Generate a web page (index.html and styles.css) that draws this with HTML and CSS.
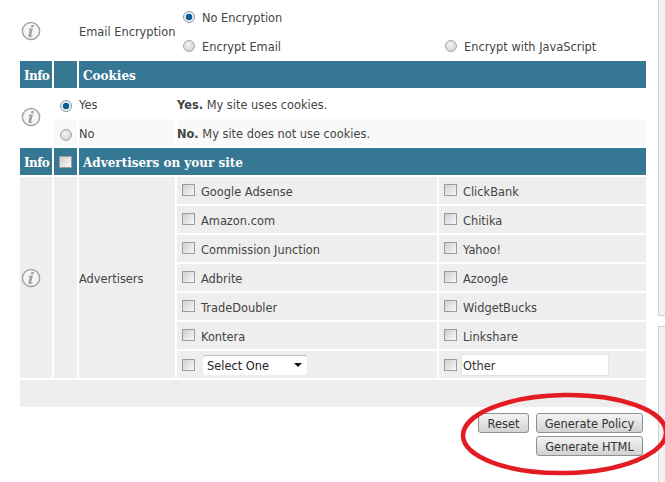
FILE: index.html
```html
<!DOCTYPE html>
<html lang="en">
<head>
<meta charset="utf-8">
<title>Privacy policy generator</title>
<link rel="stylesheet" href="styles.css">
</head>
<body>
<div class="side side-top"></div>
<div class="side side-bottom"></div>
<main class="page">
<table class="form">
<colgroup><col class="c-info"><col class="c-check"><col class="c-label"><col class="c-main"><col class="c-alt"></colgroup>
<tr class="sliver"><td colspan="5"></td></tr>
<tr class="enc">
<td class="info"><svg class="i-icon" viewBox="0 0 20 20"><use href="#info"/></svg></td>
<td></td>
<td class="label">Email Encryption</td>
<td colspan="2" class="enc-opts">
<div class="enc-line"><span class="enc-item"><span class="radio on"></span><span class="enc-text">No Encryption</span></span></div>
<div class="enc-line"><span class="enc-item"><span class="radio"></span><span class="enc-text">Encrypt Email</span></span><span class="enc-item"><span class="radio"></span><span class="enc-text">Encrypt with JavaScript</span></span></div>
</td>
</tr>
<tr class="head"><th class="head-info">Info</th><th></th><th colspan="3">Cookies</th></tr>
<tr class="plain">
<td class="info up" rowspan="2"><svg class="i-icon" viewBox="0 0 20 20"><use href="#info"/></svg></td>
<td class="mid"><span class="radio on"></span></td>
<td>Yes</td>
<td colspan="2"><b>Yes.</b> My site uses cookies.</td>
</tr>
<tr class="plain alt">
<td class="mid"><span class="radio"></span></td>
<td>No</td>
<td colspan="2"><b>No.</b> My site does not use cookies.</td>
</tr>
<tr class="head"><th class="head-info">Info</th><th class="mid"><span class="check"></span></th><th colspan="3">Advertisers on your site</th></tr>
<tr class="ad">
<td class="info" rowspan="7"><svg class="i-icon" viewBox="0 0 20 20"><use href="#info"/></svg></td>
<td rowspan="7"></td>
<td rowspan="7" class="label">Advertisers</td>
<td class="opt"><span class="check"></span>Google Adsense</td>
<td class="opt"><span class="check"></span>ClickBank</td>
</tr>
<tr class="ad"><td class="opt"><span class="check"></span>Amazon.com</td><td class="opt"><span class="check"></span>Chitika</td></tr>
<tr class="ad"><td class="opt"><span class="check"></span>Commission Junction</td><td class="opt"><span class="check"></span>Yahoo!</td></tr>
<tr class="ad"><td class="opt"><span class="check"></span>Adbrite</td><td class="opt"><span class="check"></span>Azoogle</td></tr>
<tr class="ad"><td class="opt"><span class="check"></span>TradeDoubler</td><td class="opt"><span class="check"></span>WidgetBucks</td></tr>
<tr class="ad"><td class="opt"><span class="check"></span>Kontera</td><td class="opt"><span class="check"></span>Linkshare</td></tr>
<tr class="ad">
<td class="field"><span class="check"></span><span class="select"><span class="select-text">Select One</span><span class="caret"></span></span></td>
<td class="field"><span class="check tight"></span><span class="textbox">Other</span></td>
</tr>
<tr class="foot"><td colspan="5"></td></tr>
</table>
<div class="actions">
<div class="action-row"><button class="btn btn-reset">Reset</button><button class="btn btn-wide">Generate Policy</button></div>
<div class="action-row"><button class="btn btn-wide">Generate HTML</button></div>
</div>
</main>
<svg class="ring" viewBox="0 0 665 482"><ellipse cx="564.5" cy="434" rx="101.5" ry="39" transform="rotate(-1 564.5 434)"/></svg>
<svg class="defs" width="0" height="0">
<symbol id="info" viewBox="0 0 20 20">
<circle cx="10" cy="10" r="8.6" fill="#f6f6f6" stroke="#a6a6a6" stroke-width="1.5"/>
<path d="M10.4 3.9h2.7l-.6 2.4h-2.7zM8.6 7.6h3.4l-1.9 6.6c-.1.5.3.6 1.3.1l-.2 1.1c-2 1-4.1.9-3.8-1l1.3-5.3-1 .1.2-1.3z" fill="#a2a2a2"/>
</symbol>
</svg>
</body>
</html>
```
FILE: styles.css
```css
html, body { margin: 0; padding: 0; background: #fff; }
body { width: 665px; height: 482px; overflow: hidden; position: relative; font-family: "DejaVu Sans", sans-serif; font-size: 11.4px; color: #444; }
.page { padding-left: 18px; width: 630px; }
.form { border-collapse: separate; border-spacing: 2px; table-layout: fixed; width: 630px; margin-top: -2px; }
.c-info { width: 32px; }
.c-check { width: 23px; }
.c-label { width: 96px; }
.c-main { width: 260px; }
.c-alt { width: 207px; }
.form td, .form th { padding: 0; font-weight: normal; box-sizing: border-box; white-space: nowrap; }
.form td b { font-weight: bold; }
.sliver td { height: 1px; background: #fafafa; }
.enc td { height: 56px; background: #fff; }
.form .label { padding-top: 2px; }
.info { vertical-align: middle; }
.i-icon { width: 20px; height: 20px; display: block; margin-left: 1px; }
.info.up .i-icon { margin-top: -3px; }
.form .enc-opts { vertical-align: top; padding: 1px 0 0 6px; }
.enc-line { height: 26px; display: grid; grid-template-columns: 262px auto; align-items: center; }
.enc-line + .enc-line { margin-top: 3px; }
.enc-item { display: flex; align-items: center; gap: 7px; }
.enc-text { padding-top: 2px; }
.radio { display: inline-block; box-sizing: border-box; width: 12px; height: 12px; border-radius: 50%; border: 1px solid #a3a3a3; background: radial-gradient(circle at 40% 35%, #f4f4f4, #c9c9c9); flex: none; }
.radio.on { border-color: #8b9aa5; background: radial-gradient(circle, #0f5f94 0 3px, #e9eef1 3.6px); }
.form .head th { height: 27px; background: #367793; color: #fff; font-family: "DejaVu Serif", serif; font-weight: bold; font-size: 12px; text-align: left; padding: 2px 0 0 4px; }
.form .head .head-info { letter-spacing: -0.6px; }
.plain td { height: 27px; padding-top: 2px; }
.form .plain.alt td { background: #f9f9f9; }
.form .plain td.info { background: #fff; padding-top: 0; }
.form .mid { vertical-align: middle; padding-left: 0; }
.form .plain .mid { padding-top: 5px; }
.form .head .mid { padding: 0; }
.mid .radio { display: block; margin: 0 0 0 6px; }
.mid .check { display: block; margin: 0 0 0 5px; }
.ad td { height: 27px; background: #eee; vertical-align: middle; }
.form .opt { padding: 2px 0 0 5px; }
.form .field { padding-left: 5px; }
.check { display: inline-block; box-sizing: border-box; width: 13px; height: 12px; border: 1px solid #9c9c9c; background: linear-gradient(135deg, #cfcfcf, #f9f9f9); margin-right: 6px; vertical-align: 0; }
.field .check { vertical-align: middle; }
.check.tight { margin-right: 4px; }
.select { display: inline-flex; align-items: center; justify-content: space-between; box-sizing: border-box; width: 104px; height: 20px; margin-left: 2px; background: #fff; color: #222; padding: 0 3px 0 4px; border-radius: 2px; vertical-align: middle; box-shadow: inset 0 1px 0 #bbb; }
.select-text { padding-top: 2px; }
.caret { width: 0; height: 0; border-left: 4px solid transparent; border-right: 4px solid transparent; border-top: 4px solid #111; margin-right: 2px; }
.textbox { display: inline-block; box-sizing: border-box; width: 148px; height: 22px; line-height: 22px; background: #fff; color: #333; padding-left: 1px; border: 1px solid #e4e4e4; border-radius: 2px; vertical-align: middle; }
.foot td { height: 27px; background: #eee; }
.actions { display: flex; flex-direction: column; align-items: flex-end; gap: 3px; padding: 4px 5px 0 0; }
.action-row { display: flex; gap: 7px; }
.btn { box-sizing: border-box; height: 20px; padding: 2px 0 0; font: 11.4px "DejaVu Sans", sans-serif; color: #333; border: 1px solid #8f8f8f; border-radius: 3px; background: linear-gradient(#f4f4f4, #d2d2d2); }
.btn-reset { width: 51px; }
.btn-wide { width: 107px; }
.ring { position: absolute; left: 0; top: 0; width: 665px; height: 482px; pointer-events: none; }
.ring ellipse { fill: none; stroke: #e31b23; stroke-width: 4.5; }
.defs { position: absolute; }
.side { position: absolute; left: 658px; width: 7px; box-sizing: border-box; background: #f2f2f2; border-left: 1px solid #cfcfcf; }
.side-top { top: 0; height: 316px; border-bottom: 1px solid #cfcfcf; }
.side-bottom { top: 326px; height: 156px; border-top: 1px solid #cfcfcf; }
```
